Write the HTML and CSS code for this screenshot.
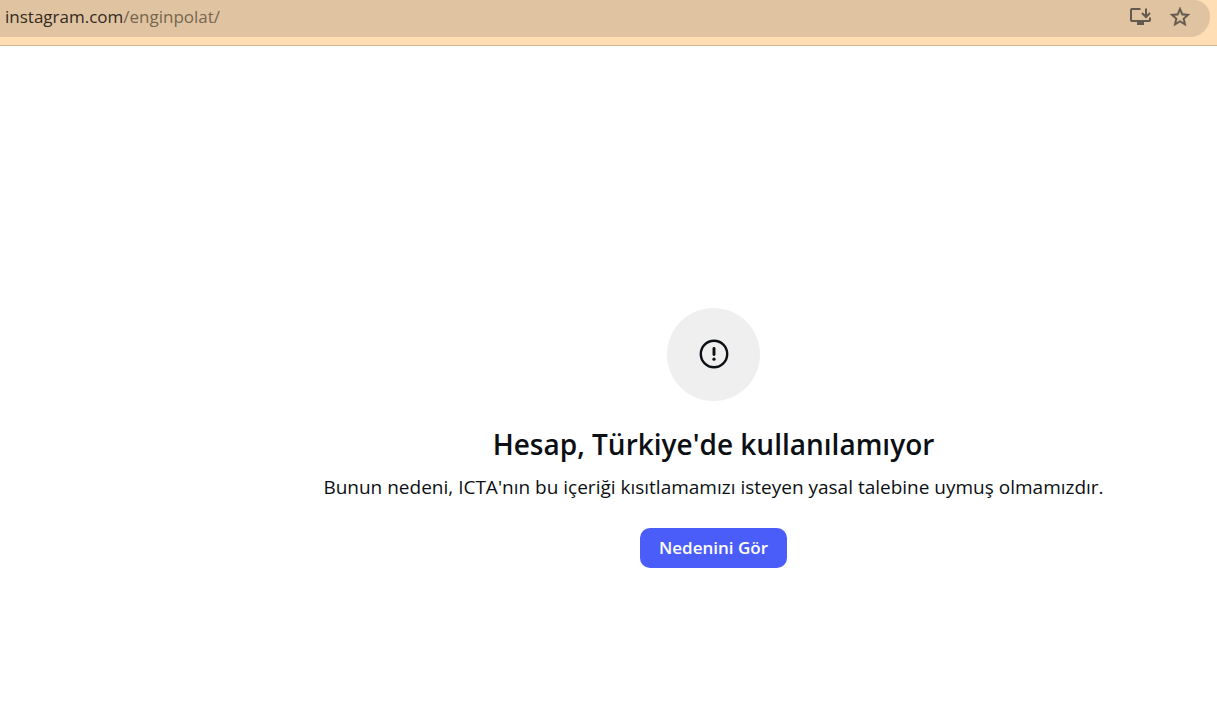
FILE: index.html
```html
<!DOCTYPE html>
<html lang="tr">
<head>
<meta charset="utf-8">
<title>Instagram</title>
<link rel="stylesheet" href="styles.css">
</head>
<body>
<header class="toolbar">
  <div class="omnibox">
    <div class="url" role="textbox" contenteditable="true" spellcheck="false" aria-label="Adres çubuğu">instagram.com<span class="url-path">/enginpolat/</span></div>
    <button class="icon-button" type="button" aria-label="Uygulamayı yükle">
      <svg width="24" height="24" viewBox="0 0 24 24" fill="none" stroke="currentColor" stroke-width="2">
        <path d="M12.5 4H4Q3 4 3 5V15Q3 16 4 16H21Q22 16 22 15V12.500"/>
        <path d="M18 3.500V11.500M14 8L18 12L22 8"/>
        <path d="M9 18.500H16" stroke-width="3"/>
      </svg>
    </button>
    <button class="icon-button" type="button" aria-label="Yer işareti ekle">
      <svg width="24" height="24" viewBox="0 0 24 24" fill="currentColor" stroke="currentColor" stroke-width=".4">
        <path d="M22 9.240l-7.190-.62L12 2 9.190 8.630 2 9.240l5.460 4.730L5.820 21 12 17.270 18.180 21l-1.630-7.030L22 9.240zM12 15.400l-3.760 2.270 1-4.280-3.320-2.880 4.380-.38L12 6.100l1.710 4.040 4.380.38-3.320 2.880 1 4.280L12 15.400z"/>
      </svg>
    </button>
  </div>
</header>
<main class="page">
  <div class="badge">
    <svg width="32" height="32" viewBox="0 0 32 32" fill="none" stroke="currentColor" aria-hidden="true">
      <circle cx="16" cy="16" r="13.200" stroke-width="2.400"/>
      <path d="M16 10.500V16.500" stroke-width="2.900" stroke-linecap="round"/>
      <circle cx="16" cy="21.200" r="1.600" fill="currentColor" stroke="none"/>
    </svg>
  </div>
  <h1 class="title">Hesap, Türkiye'de kullanılamıyor</h1>
  <p class="reason">Bunun nedeni, ICTA'nın bu içeriği kısıtlamamızı isteyen yasal talebine uymuş olmamızdır.</p>
  <button class="primary" type="button">Nedenini Gör</button>
</main>
</body>
</html>
```
FILE: styles.css
```css
* { box-sizing: border-box; }
body {
  margin: 0;
  min-height: 100vh;
  display: flex;
  flex-direction: column;
  background: #fff;
  color: #0c1014;
  font-family: "Segoe UI", "Open Sans", "Noto Sans", sans-serif;
}
.toolbar {
  padding: 0 7px 8px 0;
  background: #ffdeb5;
  border-bottom: 1px solid #d3b795;
}
.omnibox {
  display: flex;
  align-items: center;
  gap: 16px;
  height: 37px;
  padding: 0 18px 4px 5px;
  background: #e0c4a2;
  border-radius: 0 16px 20px 0;
}
.url {
  flex: 1;
  font-size: 17px;
  line-height: 24px;
  color: #33291d;
  outline: none;
}
.url-path { color: #76664f; }
.icon-button {
  display: flex;
  padding: 0;
  border: 0;
  background: none;
  color: #63594e;
}
.page {
  flex: 1;
  display: flex;
  flex-direction: column;
  align-items: center;
  justify-content: center;
  padding: 104px 0 0 210px;
}
.badge {
  display: flex;
  align-items: center;
  justify-content: center;
  width: 93px;
  height: 93px;
  border-radius: 50%;
  background: #efefef;
}
.title {
  margin: 23px 0 0;
  font-size: 28px;
  line-height: 40px;
  font-weight: 600;
}
.reason {
  margin: 10px 0 0;
  font-size: 19px;
  line-height: 26px;
}
.primary {
  height: 40px;
  margin-top: 28px;
  padding: 0 19px;
  border: 0;
  border-radius: 10px;
  background: #4a5df9;
  color: #fff;
  font: inherit;
  font-size: 17px;
  font-weight: 600;
}
```
